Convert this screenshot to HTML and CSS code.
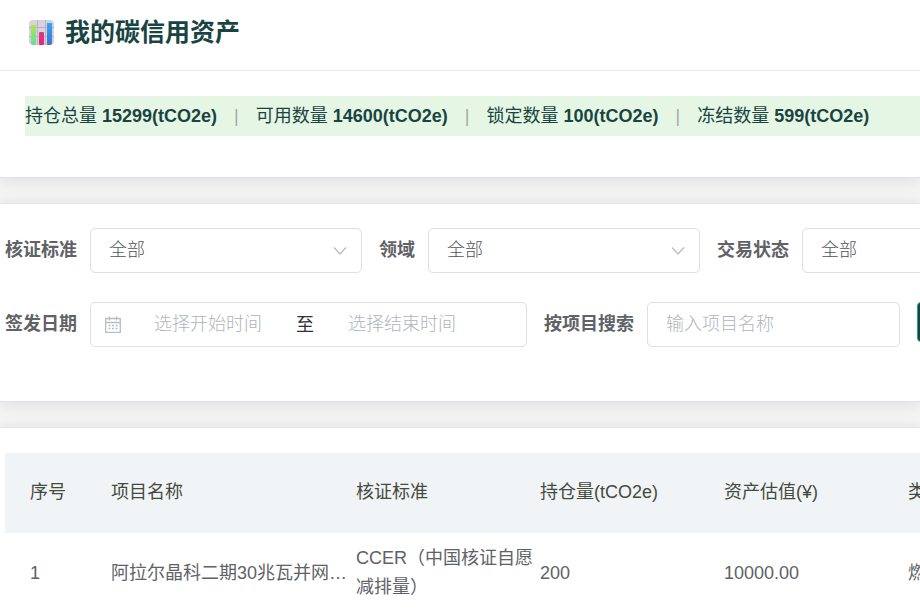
FILE: index.html
```
<!DOCTYPE html>
<html lang="zh-CN">
<head>
  <meta charset="UTF-8" />
  <title>我的碳信用资产</title>
  <link rel="stylesheet" href="styles.css">
</head>
<body>

  <section class="card">
    <header class="card-header">
      <svg width="26" height="26" viewBox="0 0 26 26" aria-hidden="true">
        <defs>
          <linearGradient id="green" x1="0" y1="0" x2="0" y2="1">
            <stop offset="0" stop-color="#b4e34c" />
            <stop offset="1" stop-color="#5fe0a0" />
          </linearGradient>
          <linearGradient id="blue" x1="0" y1="0" x2="0" y2="1">
            <stop offset="0" stop-color="#2fa8f5" />
            <stop offset="1" stop-color="#4472cc" />
          </linearGradient>
          <linearGradient id="pink" x1="0" y1="0" x2="0" y2="1">
            <stop offset="0" stop-color="#d53a86" />
            <stop offset="1" stop-color="#ee2470" />
          </linearGradient>
        </defs>
        <rect x="1" y="1" width="25" height="25" rx="4" fill="#d8d2df" />
        <path d="M1 8.500h25M1 17.500h25M9.500 1v25M17.500 1v25" fill="none" stroke="#b9b2c2" />
        <path d="M3 6h5v20H5a2 2 0 0 1-2-2z" fill="url(#green)" />
        <rect x="11" y="13" width="5" height="13" rx="1" fill="url(#pink)" />
        <path d="M19 4h5v20a2 2 0 0 1-2 2h-3z" fill="url(#blue)" />
      </svg>
      <h1>我的碳信用资产</h1>
    </header>
    <div class="summary">
      <span>持仓总量 <b>15299(tCO2e)</b></span>
      <span class="divider">|</span>
      <span>可用数量 <b>14600(tCO2e)</b></span>
      <span class="divider">|</span>
      <span>锁定数量 <b>100(tCO2e)</b></span>
      <span class="divider">|</span>
      <span>冻结数量 <b>599(tCO2e)</b></span>
    </div>
  </section>

  <form class="card filters">
    <div class="filter-row">
      <div class="field">
        <label for="standard">核证标准</label>
        <div class="select">
          <select id="standard"><option>全部</option></select>
          <svg class="line-icon" width="14" height="8" viewBox="0 0 14 8"><path d="M1 .5l6 6.500 6-6.500" /></svg>
        </div>
      </div>
      <div class="field">
        <label for="domain">领域</label>
        <div class="select">
          <select id="domain"><option>全部</option></select>
          <svg class="line-icon" width="14" height="8" viewBox="0 0 14 8"><path d="M1 .5l6 6.500 6-6.500" /></svg>
        </div>
      </div>
      <div class="field">
        <label for="status">交易状态</label>
        <div class="select">
          <select id="status"><option>全部</option></select>
          <svg class="line-icon" width="14" height="8" viewBox="0 0 14 8"><path d="M1 .5l6 6.500 6-6.500" /></svg>
        </div>
      </div>
    </div>
    <div class="filter-row">
      <div class="field">
        <label for="start">签发日期</label>
        <div class="date-range">
          <svg class="line-icon" width="16" height="17" viewBox="0 0 16 17">
            <path d="M.7 2.500h14.600v13.800H.7zM.7 6.500h14.600M4.500 .5v4M11.500 .5v4M3.500 9.500h2M7 9.500h2M10.500 9.500h2M3.500 12.500h2M7 12.500h2M10.500 12.500h2" />
          </svg>
          <input type="text" id="start" placeholder="选择开始时间" />
          <label class="to" for="end">至</label>
          <input type="text" id="end" placeholder="选择结束时间" />
        </div>
      </div>
      <div class="field">
        <label for="keyword">按项目搜索</label>
        <input class="text-input" type="text" id="keyword" placeholder="输入项目名称" />
      </div>
      <button class="search-button" type="submit"></button>
    </div>
  </form>

  <section class="card table-card">
    <table>
      <colgroup>
        <col class="col-index">
        <col class="col-name">
        <col class="col-data">
        <col class="col-data">
        <col class="col-data">
        <col class="col-data">
      </colgroup>
      <thead>
        <tr>
          <th>序号</th>
          <th>项目名称</th>
          <th>核证标准</th>
          <th>持仓量(tCO2e)</th>
          <th>资产估值(¥)</th>
          <th>类</th>
        </tr>
      </thead>
      <tbody>
        <tr>
          <td>1</td>
          <td>阿拉尔晶科二期30兆瓦并网…</td>
          <td>CCER（中国核证自愿减排量）</td>
          <td>200</td>
          <td>10000.00</td>
          <td>燃</td>
        </tr>
      </tbody>
    </table>
  </section>

</body>
</html>
```
FILE: styles.css
```
* {
  box-sizing: border-box;
}

body {
  margin: 0;
  overflow: hidden;
  background: #f4f4f4;
  font-family: "Liberation Sans", "Noto Sans CJK SC", sans-serif;
  font-size: 18px;
  line-height: 29px;
  color: #606266;
}

.card {
  margin-bottom: 25px;
  background: #fff;
  border-top: 1px solid #e4e7f0;
  border-bottom: 1px solid #e0e3ec;
  box-shadow: 0 2px 15px rgba(0, 0, 0, 0.1);
}

.card:first-child {
  border-top: none;
  padding-bottom: 41px;
}

.card-header {
  display: flex;
  align-items: center;
  gap: 11px;
  height: 71px;
  padding: 0 28px 6px;
  border-bottom: 1px solid #e6ebf0;
}

h1 {
  margin: 0;
  font-size: 25px;
  font-weight: bold;
  color: #184442;
}

.summary {
  display: flex;
  align-items: center;
  height: 40px;
  margin: 25px 0 0 25px;
  background: #e6f6e4;
  color: #184442;
  white-space: nowrap;
}

.divider {
  padding: 0 17px;
  color: #a3a8a3;
}

.filters {
  display: flex;
  flex-direction: column;
  gap: 29px;
  padding: 24px 5px 54px;
}

.filter-row {
  display: flex;
  align-items: flex-start;
  gap: 17px;
}

.field {
  display: flex;
  flex-shrink: 0;
  gap: 13px;
}

label {
  font-weight: bold;
  line-height: 44px;
}

input,
select {
  font: inherit;
  font-weight: 300;
  color: #505256;
  background: #fff;
}

input::placeholder {
  color: #b0b4bc;
  opacity: 1;
}

.select {
  position: relative;
  width: 272px;
}

select,
.text-input,
.date-range {
  height: 45px;
  border: 1px solid #dcdfe6;
  border-radius: 5px;
}

select {
  width: 100%;
  padding: 0 18px;
  appearance: none;
}

.line-icon {
  flex-shrink: 0;
  fill: none;
  stroke: #b8bcc4;
  stroke-width: 1.3;
}

.select .line-icon {
  position: absolute;
  top: 19px;
  right: 15px;
}

.date-range {
  display: flex;
  align-items: center;
  width: 437px;
  padding-left: 14px;
}

.date-range input {
  width: 174px;
  height: 42px;
  padding: 0;
  border: none;
  text-align: center;
}

.to {
  width: 20px;
  font-weight: normal;
  line-height: 40px;
  text-align: center;
  color: #303133;
}

.text-input {
  width: 253px;
  padding: 0 18px;
}

.search-button {
  flex-shrink: 0;
  width: 90px;
  height: 40px;
  background: #184442;
  border: 1px solid #1fa67a;
  border-radius: 4px;
}

.table-card {
  padding: 25px 0 25px 5px;
  margin-bottom: 0;
}

table {
  width: 1082px;
  table-layout: fixed;
  border-collapse: collapse;
}

.col-index {
  width: 101px;
}

.col-name {
  width: 245px;
}

.col-data {
  width: 184px;
}

th,
td {
  height: 80px;
  padding: 0 0 0 5px;
  text-align: left;
}

th:first-child,
td:first-child {
  padding-left: 25px;
}

th {
  padding-bottom: 2px;
  background: #f0f4f7;
  font-weight: normal;
  color: #444a3c;
}
```
